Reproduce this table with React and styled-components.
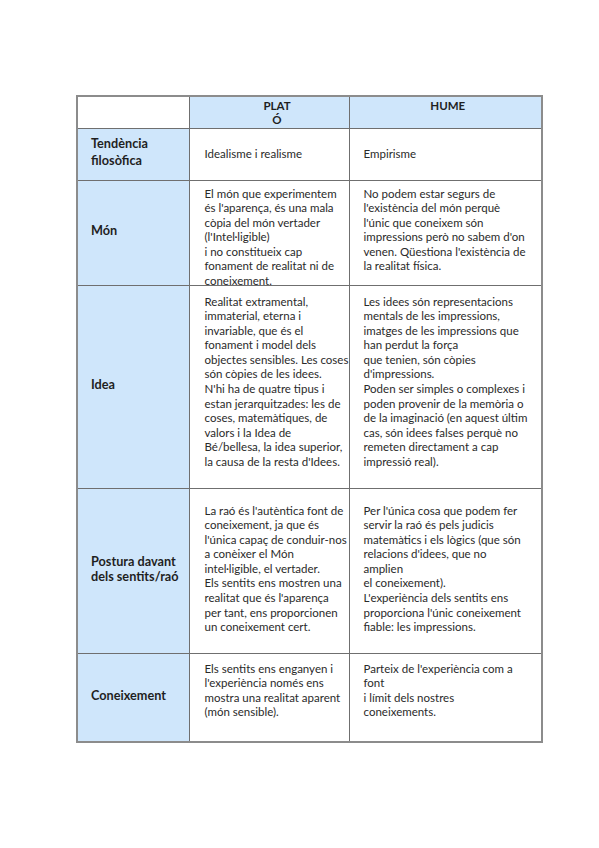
import React from "react";
import styled, { createGlobalStyle } from "styled-components";

const GlobalStyle = createGlobalStyle`
  html, body {
    margin: 0;
    padding: 0;
    background: #ffffff;
  }
  body {
    font-family: Lato, "Open Sans", sans-serif;
    color: #222;
  }
`;

const Page = styled.div`
  width: 599px;
  min-height: 848px;
  padding: 95px 0 0 76px;
  box-sizing: border-box;
`;

const Table = styled.table`
  width: 465px;
  table-layout: fixed;
  border-collapse: collapse;
  border: 2px solid #8c8c8c;
`;

const Col = styled.col`
  width: ${(p) => p.$w}px;
`;

const Row = styled.tr`
  height: ${(p) => p.$h}px;
`;

const HeadCell = styled.th`
  background: #cfe6fb;
  border: 1px solid #6f6f6f;
  padding: 2px 0 0 ${(p) => p.$shift || 0}px;
  vertical-align: top;
  text-align: center;
  font-size: 11.5px;
  line-height: 14px;
  font-weight: 700;
  color: #1f1f1f;
`;

const EmptyHead = styled.th`
  background: #ffffff;
  border: 1px solid #6f6f6f;
`;

const Label = styled.th`
  background: #cfe6fb;
  border: 1px solid #6f6f6f;
  padding: 0 0 4px 13px;
  text-align: left;
  vertical-align: middle;
  font-size: 12.7px;
  line-height: ${(p) => p.$lh || 15}px;
  font-weight: 700;
  color: #1f1f1f;
`;

const Cell = styled.td`
  border: 1px solid #6f6f6f;
  padding: ${(p) => p.$top || 0}px 4px 0 ${(p) => p.$left}px;
  vertical-align: ${(p) => (p.$top === undefined ? "middle" : "top")};
  font-size: 11.5px;
  line-height: 14.6px;
  color: #2a2a2a;
  white-space: nowrap;
`;

const Text = styled.div`
  max-height: ${(p) => p.$max}px;
  overflow: visible;
`;

const Lines = ({ lines }) =>
  lines.map((l, i) => (
    <React.Fragment key={i}>
      {i > 0 && <br />}
      {l}
    </React.Fragment>
  ));

const rows = [
  {
    h: 52,
    label: ["Tendència", "filosòfica"],
    lh: 17,
    plato: ["Idealisme i realisme"],
    hume: ["Empirisme"],
  },
  {
    h: 105,
    label: ["Món"],
    top: 6,
    plato: [
      "El món que experimentem",
      "és l'aparença, és una mala",
      "còpia del món vertader",
      "(l'Intel·ligible)",
      "i no constitueix cap",
      "fonament de realitat ni de",
      "coneixement.",
    ],
    hume: [
      "No podem estar segurs de",
      "l'existència del món perquè",
      "l'únic que coneixem són",
      "impressions però no sabem d'on",
      "venen. Qüestiona l'existència de",
      "la realitat física.",
    ],
  },
  {
    h: 203,
    label: ["Idea"],
    top: 9,
    plato: [
      "Realitat extramental,",
      "immaterial, eterna i",
      "invariable, que és el",
      "fonament i model dels",
      "objectes sensibles. Les coses",
      "són còpies de les idees.",
      "N'hi ha de quatre tipus i",
      "estan jerarquitzades: les de",
      "coses, matemàtiques, de",
      "valors i la Idea de",
      "Bé/bellesa, la idea superior,",
      "la causa de la resta d'Idees.",
    ],
    hume: [
      "Les idees són representacions",
      "mentals de les impressions,",
      "imatges de les impressions que",
      "han perdut la força",
      "que tenien, són còpies",
      "d'impressions.",
      "Poden ser simples o complexes i",
      "poden provenir de la memòria o",
      "de la imaginació (en aquest últim",
      "cas, són idees falses perquè no",
      "remeten directament a cap",
      "impressió real).",
    ],
  },
  {
    h: 165,
    label: ["Postura davant", "dels sentits/raó"],
    lh: 14.5,
    top: 15,
    plato: [
      "La raó és l'autèntica font de",
      "coneixement, ja que és",
      "l'única capaç de conduir-nos",
      "a conèixer el Món",
      "intel·ligible, el vertader.",
      "Els sentits ens mostren una",
      "realitat que és l'aparença",
      "per tant, ens proporcionen",
      "un coneixement cert.",
    ],
    hume: [
      "Per l'única cosa que podem fer",
      "servir la raó és pels judicis",
      "matemàtics i els lògics (que són",
      "relacions d'idees, que no",
      "amplien",
      "el coneixement).",
      "L'experiència dels sentits ens",
      "proporciona l'únic coneixement",
      "fiable: les impressions.",
    ],
  },
  {
    h: 89,
    label: ["Coneixement"],
    top: 8,
    plato: [
      "Els sentits ens enganyen i",
      "l'experiència només ens",
      "mostra una realitat aparent",
      "(món sensible).",
    ],
    hume: [
      "Parteix de l'experiència com a",
      "font",
      "i límit dels nostres",
      "coneixements.",
    ],
  },
];

export default function App() {
  return (
    <>
      <GlobalStyle />
      <Page>
        <Table>
          <colgroup>
            <Col $w={112} />
            <Col $w={160} />
            <Col $w={193} />
          </colgroup>
          <thead>
            <Row $h={32}>
              <EmptyHead />
              <HeadCell $shift={16}>
                PLAT
                <br />Ó
              </HeadCell>
              <HeadCell $shift={5}>HUME</HeadCell>
            </Row>
          </thead>
          <tbody>
            {rows.map((r, i) => {
              const max = r.h - (r.top || 0) - 4;
              return (
                <Row key={i} $h={r.h}>
                  <Label $lh={r.lh}>
                    <Lines lines={r.label} />
                  </Label>
                  <Cell $left={15} $top={r.top}>
                    <Text $max={max}>
                      <Lines lines={r.plato} />
                    </Text>
                  </Cell>
                  <Cell $left={14} $top={r.top}>
                    <Text $max={max}>
                      <Lines lines={r.hume} />
                    </Text>
                  </Cell>
                </Row>
              );
            })}
          </tbody>
        </Table>
      </Page>
    </>
  );
}
